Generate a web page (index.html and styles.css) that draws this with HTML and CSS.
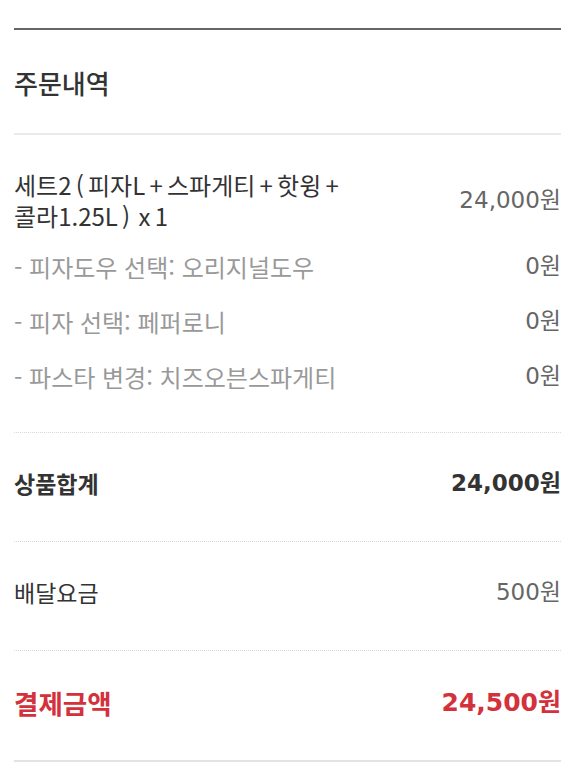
FILE: index.html
```html
<!DOCTYPE html>
<html lang="ko">
<head>
<meta charset="utf-8">
<link rel="stylesheet" href="styles.css">
</head>
<body>
<div class="order">
  <div class="title-sec">
    <h2 class="title">주문내역</h2>
  </div>
  <div class="items">
    <div class="row main-item">
      <span class="name"><span class="line">세트2 ( 피자L + 스파게티 + 핫윙 +</span><span class="line">콜라1.25L ) &nbsp;x 1</span></span>
      <span class="price">24,000원</span>
    </div>
    <div class="opts">
      <div class="row opt">
        <span class="name">- 피자도우 선택: 오리지널도우</span>
        <span class="price">0원</span>
      </div>
      <div class="row opt">
        <span class="name">- 피자 선택: 페퍼로니</span>
        <span class="price">0원</span>
      </div>
      <div class="row opt">
        <span class="name">- 파스타 변경: 치즈오븐스파게티</span>
        <span class="price">0원</span>
      </div>
    </div>
  </div>
  <div class="sum bold">
    <span class="label">상품합계</span>
    <span class="price">24,000원</span>
  </div>
  <div class="sum fee">
    <span class="label">배달요금</span>
    <span class="price">500원</span>
  </div>
  <div class="sum total">
    <span class="label">결제금액</span>
    <span class="price">24,500원</span>
  </div>
</div>
</body>
</html>
```

FILE: styles.css
```css
html, body {
  margin: 0;
  padding: 0;
  background: #fff;
}
body {
  font-family: "Noto Sans CJK KR", "Noto Sans", sans-serif;
  color: #333;
}
.order {
  margin: 28px 19px 0 14px;
  border-top: 2px solid #666;
}
.title-sec {
  padding: 36px 0 33px;
  border-bottom: 2px solid #ebebeb;
}
.title {
  margin: 0;
  font-size: 26px;
  line-height: 34px;
  font-weight: 500;
  color: #333;
}
.items {
  padding: 34px 0 40px;
  border-bottom: 1px dotted #d8d8d8;
  display: flex;
  flex-direction: column;
  gap: 20px;
}
.opts {
  display: flex;
  flex-direction: column;
  gap: 24px;
}
.row {
  display: flex;
  justify-content: space-between;
  align-items: center;
  font-size: 24px;
  line-height: 31px;
}
.main-item .name {
  color: #333;
  word-spacing: -2.5px;
  display: flex;
  flex-direction: column;
}
.main-item .line {
  display: block;
  height: 31px;
}
.price {
  font-family: "DejaVu Sans", "Noto Sans CJK KR", sans-serif;
  font-size: 23px;
}
.main-item .price { color: #666; }
.opt .name { color: #999; }
.opt .price { color: #666; }
.sum {
  display: flex;
  justify-content: space-between;
  align-items: center;
  padding: 33px 0 41px;
  font-size: 23px;
  line-height: 34px;
  border-bottom: 1px dotted #d8d8d8;
}
.sum.bold {
  font-weight: 700;
  color: #333;
}
.fee .price { color: #666; }
.sum.total {
  color: #d3313b;
  font-weight: 700;
  font-size: 26.5px;
  padding: 35px 0 40px;
  border-bottom: 2px solid #e3e3e3;
}
.sum.total .price { font-size: 25px; }
```
